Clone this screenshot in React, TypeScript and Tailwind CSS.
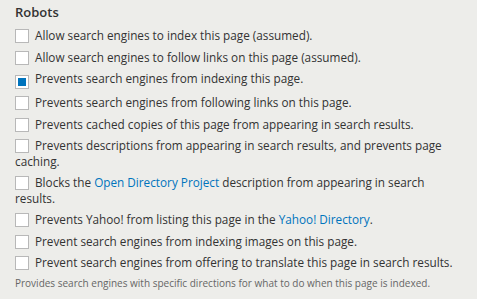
const ITEMS: { label: React.ReactNode; checked?: boolean }[] = [
  { label: "Allow search engines to index this page (assumed)." },
  { label: "Allow search engines to follow links on this page (assumed)." },
  { label: "Prevents search engines from indexing this page.", checked: true },
  { label: "Prevents search engines from following links on this page." },
  { label: "Prevents cached copies of this page from appearing in search results." },
  { label: "Prevents descriptions from appearing in search results, and prevents page caching." },
  {
    label: (
      <>
        Blocks the <a className="text-[#0074bd]">Open Directory Project</a> description from appearing in search
        results.
      </>
    ),
  },
  {
    label: (
      <>
        Prevents Yahoo! from listing this page in the <a className="text-[#0074bd]">Yahoo! Directory</a>.
      </>
    ),
  },
  { label: "Prevent search engines from indexing images on this page." },
  { label: "Prevent search engines from offering to translate this page in search results." },
];

function Checkbox({ checked }: { checked?: boolean }) {
  return (
    <span className="mr-[6px] inline-grid h-[14px] w-[14px] place-items-center border border-[#b8b8b8] bg-white align-[-3px]">
      {checked && <span className="h-[8px] w-[8px] bg-[#0074bd]" />}
    </span>
  );
}

export default function App() {
  return (
    <div
      className="h-[299px] w-[477px] bg-[#ededea] px-[15px] pt-[2px] text-[#333]"
      style={{ fontFamily: '"Open Sans", sans-serif' }}
    >
      <div className="text-[13px] font-semibold leading-[20px]">Robots</div>
      <div className="mt-[6px] flex flex-col gap-[6px]">
        {ITEMS.map((it, i) => (
          <div key={i} className="text-[11.75px] leading-[15.5px]">
            <Checkbox checked={it.checked} />
            {it.label}
          </div>
        ))}
      </div>
      <div className="mt-[4px] text-[10px] leading-[16px] text-[#666]">
        Provides search engines with specific directions for what to do when this page is indexed.
      </div>
    </div>
  );
}
